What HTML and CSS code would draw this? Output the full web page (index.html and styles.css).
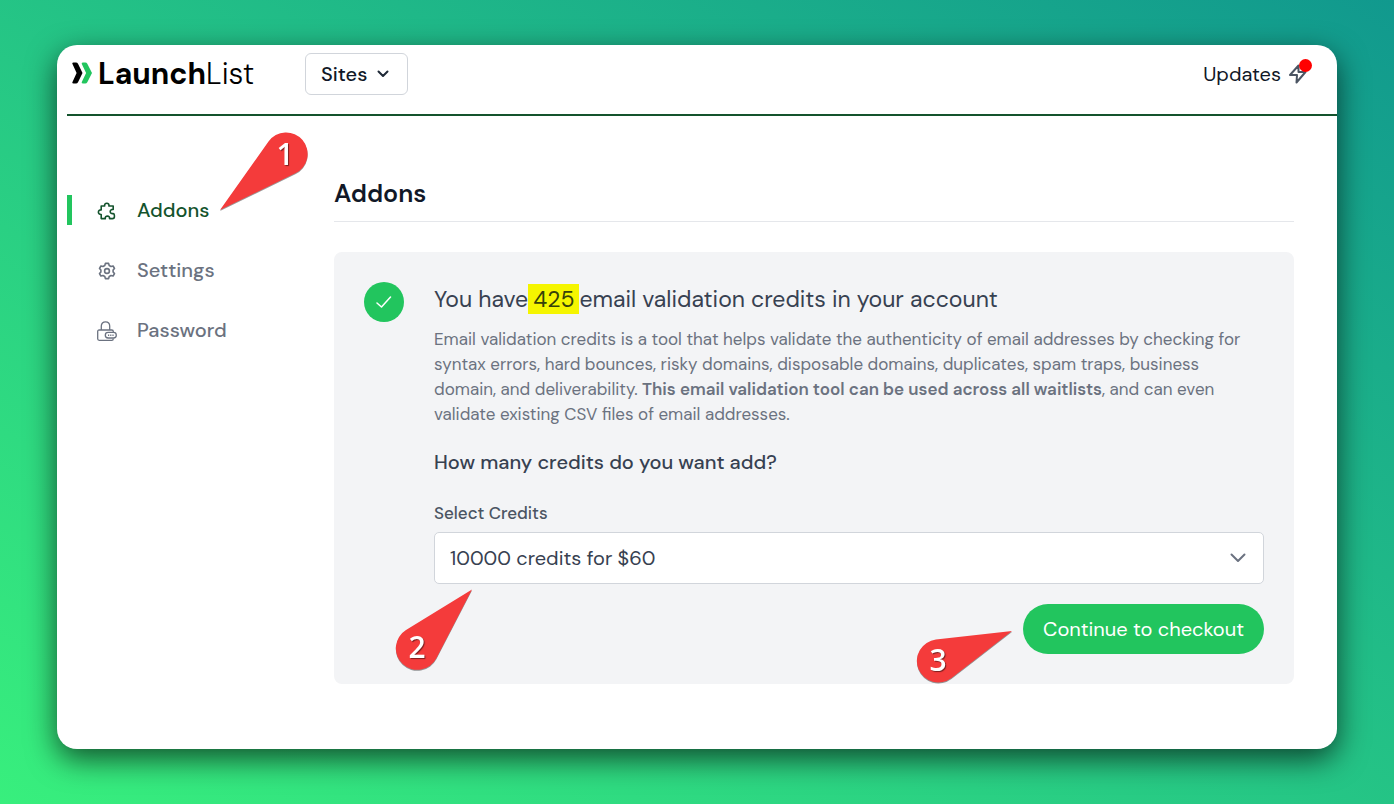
FILE: index.html
```html
<!DOCTYPE html>
<html lang="en">
<head>
    <meta charset="UTF-8">
    <meta name="viewport" content="width=device-width, initial-scale=1.0">
    <title>LaunchList - Addons</title>
    <link rel="stylesheet" href="styles.css">
</head>
<body>
    <div class="window">
        <header class="topbar">
            <a class="logo" href="#">
                <svg width="22" height="22" viewBox="0 0 22 22" aria-hidden="true">
                    <path d="M1.5 0.5H4Q5.3 0.5 6 1.8L10.5 11L6 20.2Q5.3 21.5 4 21.5H1.5Q-0.3 21.5 0.6 19.8L4.6 11L0.6 2.2Q-0.3 0.5 1.5 0.5Z" fill="#000"/>
                    <path d="M10.8 0.5H13.3Q14.6 0.5 15.3 1.8L20 11L15.3 20.2Q14.6 21.5 13.3 21.5H10.8Q9 21.5 9.9 19.8L14.1 11L9.9 2.2Q9 0.5 10.8 0.5Z" fill="#22c55e"/>
                </svg>
                <span class="logo-text"><b>Launch</b>List</span>
            </a>
            <button type="button" class="sites">
                Sites
                <svg width="12" height="8" viewBox="0 0 12 8" fill="none" stroke="#1f2937" stroke-width="2" stroke-linecap="round" stroke-linejoin="round" aria-hidden="true">
                    <path d="M1.5 1.5L6 6L10.5 1.5"/>
                </svg>
            </button>
            <a class="updates" href="#">
                Updates
                <span class="bolt">
                    <svg width="20" height="20" viewBox="0 0 20 20" fill="none" stroke="#4b5563" stroke-width="2" stroke-linejoin="round" aria-hidden="true">
                        <path d="M10.5 1.5L2 11H9L8.5 18.5L17.5 8H10.5Z"/>
                    </svg>
                    <span class="dot"></span>
                </span>
            </a>
        </header>

        <div class="content">
            <nav class="sidebar">
                <a class="side-link active" href="#">
                    <svg width="20" height="20" viewBox="0 0 20 20" fill="none" stroke="currentColor" stroke-width="1.6" stroke-linejoin="round" aria-hidden="true">
                        <path d="M4.2 5H7.7C7.3 3.4 8.2 2.2 9.8 2.2S12.3 3.4 11.9 5H16.2V8.4C14.6 8.2 13.2 9 13.2 10.6S14.6 12.9 16.2 12.6Q17.4 12.8 17.4 14.4V15.8Q17.4 17.6 15.4 17.6H12.5C12.8 16.1 11.9 15.1 10.4 15.1S8 16.1 8.3 17.6H4.2V13.5C2.6 13.6 1.4 12.6 1.4 11.2S2.6 8.8 4.2 8.9Z"/>
                    </svg>
                    Addons
                </a>
                <a class="side-link" href="#">
                    <svg width="20" height="20" viewBox="0 0 20 20" fill="none" stroke="currentColor" stroke-width="1.6" stroke-linejoin="round" aria-hidden="true">
                        <path d="M8.4 2.4H11.6L12.2 4.5L14 5.5L16.1 5L17.5 7.5L16.1 9V11L17.5 12.6L16.1 15L14 14.5L12.2 15.5L11.6 17.6H8.4L7.8 15.5L6 14.5L3.9 15L2.5 12.6L3.9 11V9L2.5 7.5L3.9 5L6 5.5L7.8 4.5Z"/>
                        <circle cx="10" cy="10" r="2.4"/>
                    </svg>
                    Settings
                </a>
                <a class="side-link" href="#">
                    <svg width="20" height="20" viewBox="0 0 20 20" fill="none" stroke="currentColor" stroke-width="1.3" aria-hidden="true">
                        <path d="M4.3 9V5C4.3 2.6 6 0.8 8.5 0.8S12.7 2.6 12.7 5V9"/>
                        <path d="M16.3 11.3V10.5Q16.3 9 14.8 9H2.2Q0.7 9 0.7 10.5V17.8Q0.7 19.3 2.2 19.3H14.8Q16.3 19.3 16.3 17.4"/>
                        <rect x="8.3" y="11.4" width="11" height="5.6" rx="2.8"/>
                        <path d="M11 14.2h1.2M13.2 14.2h1.2M15.4 14.2h1.2" stroke-width="1.5"/>
                    </svg>
                    Password
                </a>
                <svg class="callout callout-1" width="90" height="80" viewBox="0 0 90 80" role="img" aria-label="Step 1">
                    <path d="M2 79L50.5 10.6A21.5 21.5 0 1 1 77.4 42.3Z"/>
                    <text x="67" y="34">1</text>
                </svg>
            </nav>

            <main class="main">
                <h1>Addons</h1>
                <section class="panel">
                    <div class="check">
                        <svg width="16" height="12" viewBox="0 0 16 12" fill="none" stroke="#fff" stroke-width="1.5" stroke-linecap="round" stroke-linejoin="round" aria-hidden="true">
                            <path d="M1 7L5.5 11L14.5 1"/>
                        </svg>
                    </div>
                    <form class="credits">
                        <h2>You have<mark>425</mark>email validation credits in your account</h2>
                        <p>Email validation credits is a tool that helps validate the authenticity of email addresses by checking for syntax errors, hard bounces, risky domains, disposable domains, duplicates, spam traps, business domain, and deliverability. <b>This email validation tool can be used across all waitlists</b>, and can even validate existing CSV files of email addresses.</p>
                        <h3>How many credits do you want add?</h3>
                        <label for="credits">Select Credits</label>
                        <div class="select-wrap">
                            <select id="credits" name="credits">
                                <option>10000 credits for $60</option>
                            </select>
                            <svg class="chevron" width="16" height="10" viewBox="0 0 16 10" fill="none" stroke="#6b7280" stroke-width="2" stroke-linecap="round" stroke-linejoin="round" aria-hidden="true">
                                <path d="M1.5 1.5L8 8L14.5 1.5"/>
                            </svg>
                            <svg class="callout callout-2" width="80" height="84" viewBox="0 0 80 84" role="img" aria-label="Step 2">
                                <path d="M77 1.5L11 42A21.5 21.5 0 1 0 41.4 70.2Z"/>
                                <text x="22" y="70">2</text>
                            </svg>
                        </div>
                        <div class="actions">
                            <button type="button" class="checkout">Continue to checkout</button>
                            <svg class="callout callout-3" width="98" height="56" viewBox="0 0 98 56" role="img" aria-label="Step 3">
                                <path d="M97 2L20.9 10.6A21.5 21.5 0 1 0 36.5 49Z"/>
                                <text x="23" y="42">3</text>
                            </svg>
                        </div>
                    </form>
                </section>
            </main>
        </div>
    </div>
</body>
</html>
```

FILE: styles.css
```css
* {
    box-sizing: border-box;
}
body {
    margin: 0;
    min-height: 100vh;
    padding: 45px 57px 55px;
    display: flex;
    font-family: "DM Sans", Inter, "Open Sans", sans-serif;
    color: #111827;
    background: linear-gradient(to top right, #38ef7d, #11998e);
}
a {
    color: inherit;
    text-decoration: none;
}
.window {
    flex: 1;
    background-color: white;
    border-radius: 20px;
    box-shadow: 0 10px 30px rgba(0, 0, 0, 0.65);
}

/* top bar */
.topbar {
    display: flex;
    align-items: flex-start;
    height: 71px;
    margin-left: 10px;
    padding: 8px 29px 0 5px;
    border-bottom: 2px solid #14532d;
}
.logo {
    display: flex;
    align-items: center;
    gap: 4px;
    width: 233px;
    height: 40px;
    color: black;
}
.logo-text {
    font-size: 30px;
    font-weight: 300;
}
.logo-text b {
    font-weight: 700;
}
.sites {
    display: flex;
    align-items: center;
    gap: 10px;
    height: 42px;
    padding: 0 18px 0 15px;
    border: 1px solid #d1d5db;
    border-radius: 6px;
    background-color: white;
    font: inherit;
    font-size: 20px;
    font-weight: 500;
    color: #111827;
}
.updates {
    display: flex;
    align-items: center;
    gap: 7px;
    height: 42px;
    margin-left: auto;
    font-size: 20px;
}
.bolt {
    position: relative;
    height: 20px;
}
.dot {
    position: absolute;
    top: -5px;
    right: -4px;
    width: 13px;
    height: 13px;
    border-radius: 50%;
    background-color: red;
}

/* page */
.content {
    display: flex;
    padding: 63px 43px 65px 10px;
}
.sidebar {
    position: relative;
    flex: 0 0 267px;
    display: flex;
    flex-direction: column;
    gap: 30px;
    padding-top: 16px;
}
.side-link {
    display: flex;
    align-items: center;
    gap: 20px;
    height: 30px;
    padding-left: 25px;
    border-left: 5px solid transparent;
    font-size: 20px;
    font-weight: 500;
    color: #6b7280;
}
.side-link svg {
    margin-top: 2px;
}
.side-link.active {
    border-color: #22c55e;
    color: #14532d;
}
.main {
    flex: 1;
    min-width: 0;
}
h1, h2, h3, p {
    margin: 0;
}
h1 {
    padding-bottom: 12px;
    border-bottom: 1px solid #e5e7eb;
    font-size: 25px;
    font-weight: 600;
    line-height: 30px;
}
.panel {
    display: flex;
    gap: 30px;
    margin-top: 30px;
    padding: 30px;
    border-radius: 8px;
    background-color: #f3f4f6;
}
.check {
    flex: none;
    display: flex;
    align-items: center;
    justify-content: center;
    width: 40px;
    height: 40px;
    border-radius: 50%;
    background-color: #22c55e;
}
.credits {
    flex: 1;
    min-width: 0;
}
h2 {
    font-size: 23px;
    font-weight: 400;
    line-height: 35px;
    color: #374151;
}
mark {
    padding: 0 5px;
    background-color: #f5f500;
    color: #37410a;
}
p {
    margin-top: 10px;
    padding-right: 10px;
    font-size: 17px;
    line-height: 25px;
    color: #6b7280;
}
p b {
    font-weight: 600;
}
h3 {
    margin-top: 20px;
    font-size: 20px;
    font-weight: 500;
    line-height: 30px;
    color: #374151;
}
label {
    display: block;
    margin-top: 24px;
    font-size: 17px;
    font-weight: 500;
    line-height: 24px;
    color: #4b5563;
}
.select-wrap {
    position: relative;
    margin-top: 7px;
}
select {
    display: block;
    appearance: none;
    width: 100%;
    height: 52px;
    padding: 0 40px 0 15px;
    border: 1px solid #d1d5db;
    border-radius: 5px;
    background-color: white;
    font: inherit;
    font-size: 20px;
    color: #374151;
}
.chevron {
    position: absolute;
    top: 21px;
    right: 18px;
    pointer-events: none;
}
.actions {
    position: relative;
    display: flex;
    justify-content: flex-end;
    margin-top: 20px;
}
.checkout {
    height: 50px;
    padding: 0 20px;
    border: none;
    border-radius: 25px;
    background-color: #22c55e;
    font: inherit;
    font-size: 20px;
    color: white;
    cursor: pointer;
}

/* numbered pointers */
.callout {
    position: absolute;
    pointer-events: none;
    filter: drop-shadow(0 1px 0 rgba(0, 0, 0, 0.4));
}
.callout path {
    fill: #f43b3b;
}
.callout text {
    fill: white;
    font-family: "Open Sans", sans-serif;
    font-size: 30px;
    font-weight: 600;
    text-anchor: middle;
    text-shadow: 1px 1px 1px rgba(0, 0, 0, 0.5);
}
.callout-1 {
    top: -48px;
    left: 151px;
}
.callout-2 {
    top: 56px;
    left: -39px;
}
.callout-3 {
    top: 25px;
    right: 251px;
}
```
